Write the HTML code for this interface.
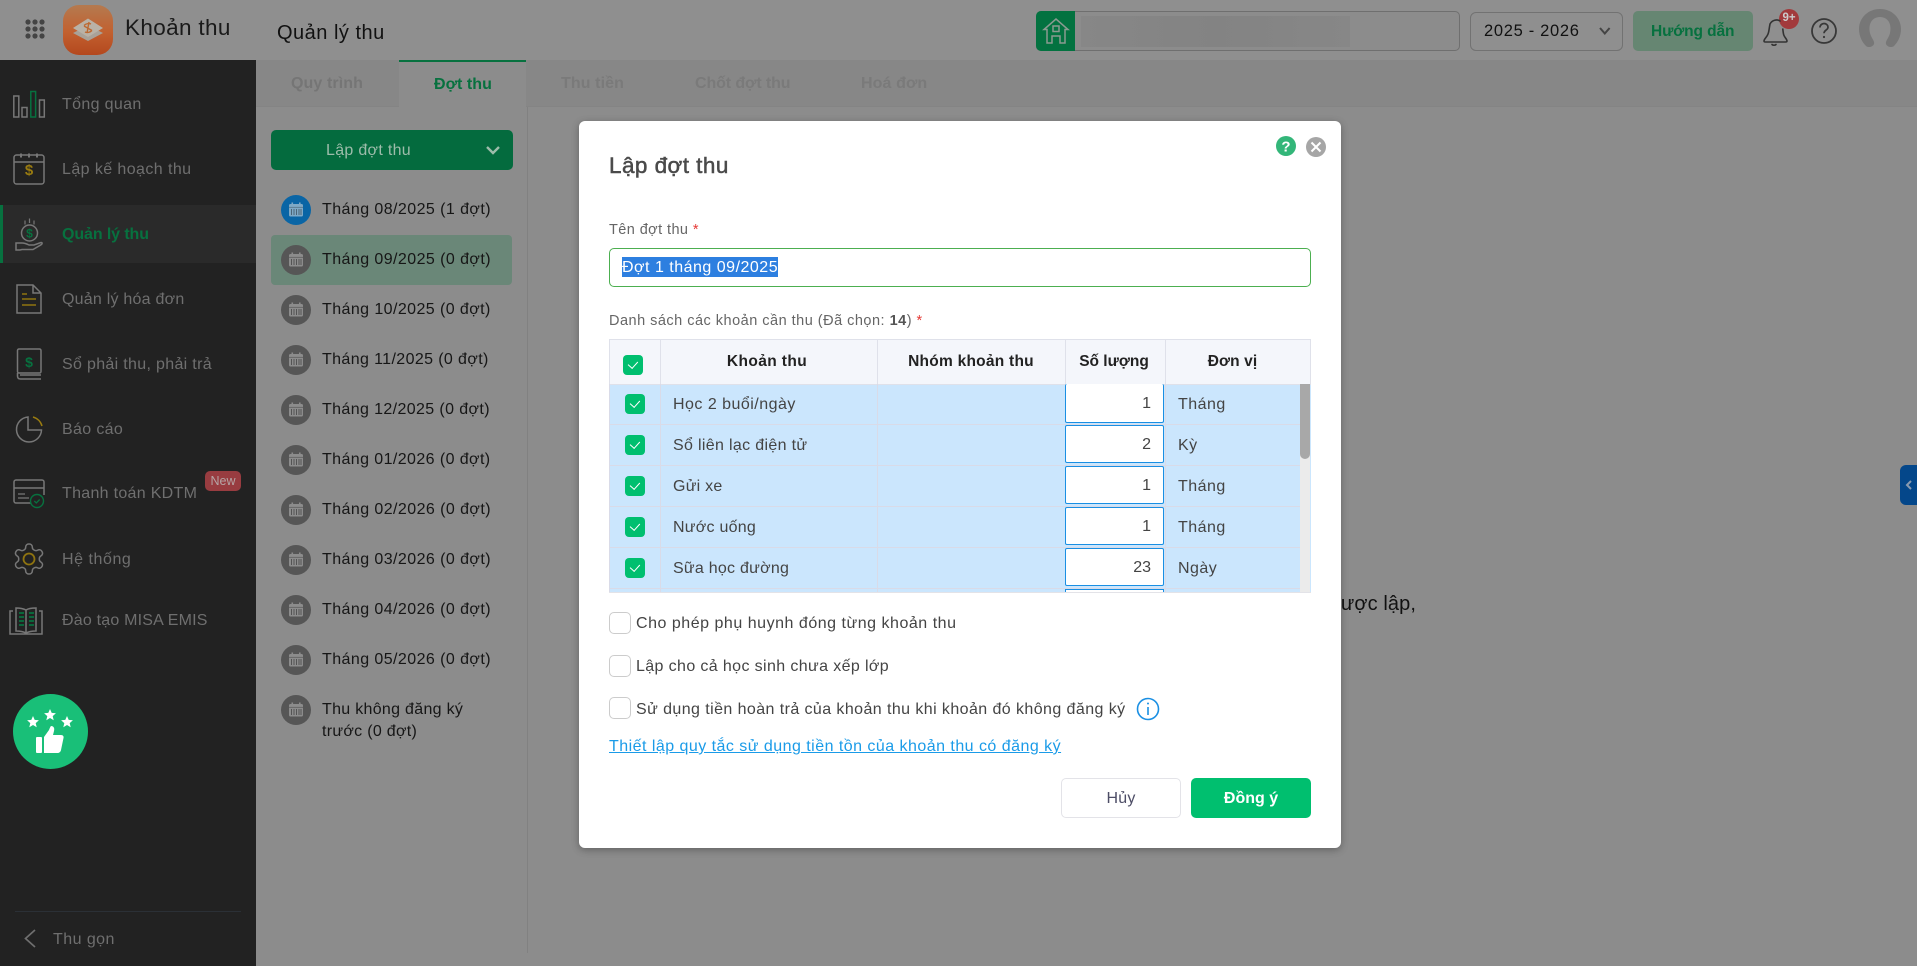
<!DOCTYPE html>
<html lang="vi">
<head>
<meta charset="utf-8">
<title>Khoản thu</title>
<style>
html,body{margin:0;padding:0;width:1917px;height:966px;overflow:hidden;background:#8c8c8c}
body{position:relative;font-family:"Liberation Sans",Arial,sans-serif;color:#111}
.t{position:absolute;white-space:nowrap;line-height:20px;height:20px}
.b{position:absolute;box-sizing:border-box}
svg.l{position:absolute;left:0;top:0;width:1917px;height:966px;pointer-events:none}
.side{font-size:16px;letter-spacing:.35px;color:#6f6f6f;left:62px}
.m{font-size:16px;letter-spacing:.43px;color:#161616;left:322px}
.tab{font-size:16px;font-weight:bold;color:#7a7a7a;letter-spacing:.1px}
.cb{position:absolute;width:20px;height:20px;background:#00bf6f;border-radius:4px}
.cb:after{content:"";position:absolute;left:7px;top:4px;width:4.5px;height:8px;border:solid #fff;border-width:0 1.6px 1.6px 0;transform:rotate(42deg)}
.c{font-size:16px;letter-spacing:.25px;color:#444;left:673px}
.u{font-size:16px;letter-spacing:.48px;color:#444;left:1178px}
.q{position:absolute;box-sizing:border-box;left:1065px;width:99px;height:38px;background:#fff;border:1px solid #1a8fe3;border-radius:2px;font-size:16px;line-height:38px;text-align:right;padding-right:12px;color:#444}
.th{font-size:15.5px;font-weight:bold;color:#222;text-align:center;letter-spacing:.1px}
.ln{position:absolute;left:609px;width:691px;height:1px;background:#d9dbe8}
.vl{position:absolute;top:384px;width:1px;height:209px;background:#d9dbe8}
.op{position:absolute;box-sizing:border-box;left:609px;width:22px;height:22px;background:#fff;border:1px solid #ccc;border-radius:5px}
.ot{font-size:16px;letter-spacing:.42px;color:#444;left:636px}
.lab{font-size:14.5px;letter-spacing:.42px;color:#666}
</style>
</head>
<body>
<svg width="0" height="0" style="position:absolute">
<symbol id="cal" viewBox="0 0 30 30"><rect x="8" y="9" width="14" height="12.5" rx="1.5" fill="currentColor"/><rect x="10.500" y="7.500" width="1.600" height="3" fill="currentColor"/><rect x="18" y="7.500" width="1.600" height="3" fill="currentColor"/><path d="M8 12.300h14" stroke="#00000055" stroke-width=".8"/><path d="M10.500 14v6M13 14v6M15.500 14v6M18 14v6M20 14v6" stroke="#00000066" stroke-width="1"/></symbol>
</svg>

<!-- header -->
<div class="b" style="left:0;top:0;width:1917px;height:60px;background:#8f8f8f"></div>
<div class="b" style="left:63px;top:5px;width:50px;height:50px;border-radius:16px;background:linear-gradient(180deg,#b47a50 0%,#c2602f 55%,#b4481e 100%)"></div>
<div class="t" style="left:125px;top:17px;font-size:22.5px;line-height:22px;height:22px;letter-spacing:.35px;color:#1a1a1a">Khoản thu</div>
<div class="t" style="left:277px;top:22px;font-size:20px;line-height:22px;height:22px;letter-spacing:.5px;color:#111">Quản lý thu</div>

<!-- right header -->
<div class="b" style="left:1036px;top:11px;width:424px;height:40px;border:1px solid #6f6f6f;border-radius:5px;background:#8c8c8c"></div>
<div class="b" style="left:1036px;top:11px;width:39px;height:40px;background:#037240;border-radius:5px 0 0 5px"></div>
<div class="b" style="left:1081px;top:16px;width:269px;height:31px;background:linear-gradient(90deg,#878787,#838383 50%,#878787)"></div>
<div class="b" style="left:1470px;top:12px;width:153px;height:39px;border:1px solid #727272;border-radius:6px"></div>
<div class="t" style="left:1484px;top:21px;font-size:16.5px;letter-spacing:.68px;color:#111">2025 - 2026</div>
<div class="b" style="left:1633px;top:11px;width:120px;height:40px;border-radius:5px;background:#668672"></div>
<div class="t" style="left:1651px;top:22px;font-size:15.5px;font-weight:bold;letter-spacing:-.1px;color:#06713f">Hướng dẫn</div>
<div class="b" style="left:1779px;top:9px;width:20px;height:20px;border-radius:50%;background:#a23a3c;color:#ccc;font-size:11.500px;font-weight:bold;line-height:19px;text-align:center">9+</div>

<!-- sidebar -->
<div class="b" style="left:0;top:60px;width:256px;height:906px;background:#222"></div>
<div class="b" style="left:0;top:205px;width:256px;height:58px;background:#2a2a2a"></div>
<div class="b" style="left:0;top:205px;width:3px;height:58px;background:#07713f"></div>
<div class="t side" style="top:95px">Tổng quan</div>
<div class="t side" style="top:160px;letter-spacing:.42px">Lập kế hoạch thu</div>
<div class="t side" style="top:225px;color:#07713f;font-weight:bold;letter-spacing:-.1px">Quản lý thu</div>
<div class="t side" style="top:290px;letter-spacing:.23px">Quản lý hóa đơn</div>
<div class="t side" style="top:355px;letter-spacing:.32px">Sổ phải thu, phải trả</div>
<div class="t side" style="top:420px">Báo cáo</div>
<div class="t side" style="top:484px;letter-spacing:.3px">Thanh toán KDTM</div>
<div class="t side" style="top:550px;letter-spacing:.55px">Hệ thống</div>
<div class="t side" style="top:611px;letter-spacing:.2px">Đào tạo MISA EMIS</div>
<div class="b" style="left:205px;top:471px;width:36px;height:20px;border-radius:5px;background:#983c40;color:#b5a5a5;font-size:12.500px;line-height:20px;text-align:center">New</div>
<div class="b" style="left:15px;top:911px;width:226px;height:1px;background:#2b3036"></div>
<div class="t side" style="left:53px;top:930px;letter-spacing:.45px">Thu gọn</div>
<div class="b" style="left:13px;top:694px;width:75px;height:75px;border-radius:50%;background:#19bf78"></div>

<!-- tabs -->
<div class="b" style="left:256px;top:60px;width:1661px;height:47px;background:#878787;border-bottom:1px solid #848484"></div>
<div class="b" style="left:399px;top:60px;width:127px;height:47px;background:#8c8c8c;border-top:2px solid #07713f"></div>
<div class="t tab" style="left:291px;top:74px;color:#757575">Quy trình</div>
<div class="t tab" style="left:434px;top:75px;color:#07713f;letter-spacing:.05px">Đợt thu</div>
<div class="t tab" style="left:561px;top:74px">Thu tiền</div>
<div class="t tab" style="left:695px;top:74px;letter-spacing:-.1px">Chốt đợt thu</div>
<div class="t tab" style="left:861px;top:74px">Hoá đơn</div>

<!-- list -->
<div class="b" style="left:527px;top:107px;width:1px;height:846px;background:#818181"></div>
<div class="b" style="left:271px;top:130px;width:242px;height:40px;border-radius:5px;background:#046b3e"></div>
<div class="t" style="left:326px;top:141px;font-size:16px;letter-spacing:.3px;color:#9dbcaa">Lập đợt thu</div>
<div class="b" style="left:271px;top:235px;width:241px;height:50px;border-radius:4px;background:#6a8778"></div>
<div class="t m" style="top:200px">Tháng 08/2025 (1 đợt)</div>
<div class="t m" style="top:250px">Tháng 09/2025 (0 đợt)</div>
<div class="t m" style="top:300px;letter-spacing:.42px">Tháng 10/2025 (0 đợt)</div>
<div class="t m" style="top:350px;letter-spacing:.38px">Tháng 11/2025 (0 đợt)</div>
<div class="t m" style="top:400px;letter-spacing:.38px">Tháng 12/2025 (0 đợt)</div>
<div class="t m" style="top:450px;letter-spacing:.41px">Tháng 01/2026 (0 đợt)</div>
<div class="t m" style="top:500px">Tháng 02/2026 (0 đợt)</div>
<div class="t m" style="top:550px">Tháng 03/2026 (0 đợt)</div>
<div class="t m" style="top:600px">Tháng 04/2026 (0 đợt)</div>
<div class="t m" style="top:650px">Tháng 05/2026 (0 đợt)</div>
<div class="t m" style="top:700px;letter-spacing:.3px">Thu không đăng ký</div>
<div class="t m" style="top:722px;letter-spacing:.3px">trước (0 đợt)</div>

<!-- background message peeking from behind the modal -->
<div class="t" style="right:501px;top:594px;font-size:20px;letter-spacing:.1px;color:#111">Các đợt thu đã được lập,</div>

<!-- right drawer -->
<div class="b" style="left:1900px;top:465px;width:17px;height:40px;border-radius:6px 0 0 6px;background:#04478a"></div>

<svg class="l" viewBox="0 0 1917 966">
<!-- app grid -->
<g fill="#444"><circle cx="28" cy="22" r="2.600"/><circle cx="35" cy="22" r="2.600"/><circle cx="42" cy="22" r="2.600"/><circle cx="28" cy="29" r="2.600"/><circle cx="35" cy="29" r="2.600"/><circle cx="42" cy="29" r="2.600"/><circle cx="28" cy="36" r="2.600"/><circle cx="35" cy="36" r="2.600"/><circle cx="42" cy="36" r="2.600"/></g>
<!-- logo -->
<path d="M73 33l15-7.500 15 7.500-15 8z" fill="#a9a298"/>
<path d="M73 28l15-9.500 15 9.500-15 9z" fill="#b9b2a6"/>
<path d="M84 25.500c2-2 5-2.500 7-1.500M85 32c2 1 5 .5 7-1.500M84 26l8 4.500M89 22l-2 11" stroke="#bd6a32" stroke-width="1.400" fill="none"/>
<!-- house -->
<g fill="none" stroke="#8a9a90" stroke-width="1.500"><path d="M1044 29.500L1056 19l12 10.500h-3V43h-5v-7h-8v7h-5V29.500z"/><rect x="1053" y="26" width="6" height="5.500"/></g>
<path d="M1600 28l4.800 5.500 4.800-5.500" fill="none" stroke="#444" stroke-width="2"/>
<!-- bell -->
<g fill="none" stroke="#333" stroke-width="1.600" stroke-linecap="round" stroke-linejoin="round"><path d="M1780 21c-3-2-8-1-10 3-1 5-1 8-2 10-1 3-4 5-4 7 0 .8 .5 1 1.500 1h20c1 0 1.500-.5 1.500-1 0-2-3-4-3.500-7-.3-1.500-.5-3-.7-5"/><path d="M1772 44.500c1 1 3 1 4 0"/></g>
<!-- help -->
<circle cx="1824" cy="31" r="12" fill="none" stroke="#383838" stroke-width="1.800"/>
<path d="M1820 27.500c0-2.500 2-4 4-4s4 1.500 4 3.700c0 2.800-4 3-4 6" fill="none" stroke="#383838" stroke-width="1.700"/><circle cx="1824" cy="37" r="1.100" fill="#383838"/>
<!-- avatar -->
<path d="M1880 9C1868 9 1859 18 1859 29C1859 36 1862 42 1866 46C1868 48 1873 47 1874 44C1875 41 1871 38 1870 33C1868 24 1872 17 1880 17C1888 17 1892 24 1890 33C1889 38 1885 41 1886 44C1887 47 1892 48 1894 46C1898 42 1901 36 1901 29C1901 18 1892 9 1880 9Z" fill="#777"/>
<!-- sidebar icons -->
<g fill="none" stroke="#777" stroke-width="1.500">
<rect x="13.800" y="96" width="5" height="21"/><rect x="22" y="107.500" width="5" height="9.500"/><rect x="39.500" y="100" width="4.800" height="17"/>
<rect x="30.800" y="91.500" width="4.800" height="25.500" stroke="#07713f"/>
<rect x="14" y="155" width="30" height="29" rx="2.500"/><path d="M14 162h30"/><path d="M21 153.500v4M29 153.500v4M37 153.500v4" stroke-width="2"/>
<circle cx="29.500" cy="233" r="8"/><path d="M25 224.500v-4M29.500 223v-4.500M34 224.500v-4" stroke-width="1.200"/>
<path d="M16 243h6c3 0 5 1 7 2h5l7-2.500c1.500 0 1.500 1.500 0 2.300l-8 4.700H22l-2 .5h-4z"/>
<path d="M17 285h16l8 8v20H17zM33 285v8h8"/>
<rect x="17.500" y="349" width="23.500" height="24" rx="1.500"/><path d="M17.500 373v3c0 2 1 3 3 3H41M20 375h21"/>
<path d="M28 417A12.500 12.500 0 1 0 41.500 430H28z"/>
<path d="M37 498v5H16a2 2 0 0 1-2-2v-19a2 2 0 0 1 2-2h26a2 2 0 0 1 2 2v13M14 488h30"/><path d="M18 494h7M18 498h11" stroke-width="1.300"/>
<path transform="translate(11 541) scale(1.500)" stroke-width="1" d="M12.220 2h-.44a2 2 0 0 0-2 2v.18a2 2 0 0 1-1 1.730l-.43.25a2 2 0 0 1-2 0l-.15-.08a2 2 0 0 0-2.730.73l-.22.38a2 2 0 0 0 .73 2.730l.15.1a2 2 0 0 1 1 1.720v.51a2 2 0 0 1-1 1.740l-.15.09a2 2 0 0 0-.73 2.730l.22.38a2 2 0 0 0 2.730.73l.15-.08a2 2 0 0 1 2 0l.43.25a2 2 0 0 1 1 1.730V20a2 2 0 0 0 2 2h.44a2 2 0 0 0 2-2v-.18a2 2 0 0 1 1-1.730l.43-.25a2 2 0 0 1 2 0l.15.08a2 2 0 0 0 2.730-.73l.22-.39a2 2 0 0 0-.73-2.730l-.15-.08a2 2 0 0 1-1-1.740v-.5a2 2 0 0 1 1-1.740l.15-.09a2 2 0 0 0 .73-2.730l-.22-.38a2 2 0 0 0-2.730-.73l-.15.08a2 2 0 0 1-2 0l-.43-.25a2 2 0 0 1-1-1.730V4a2 2 0 0 0-2-2z"/>
<path d="M26 610c-4-2-7-2-10-2v23c4 0 7 .5 10 2zM26 610c3-2 7-2 10-2v23c-4 0-7 .5-10 2zM13 611h-3v23h32v-23h-3"/>
<path d="M35 930l-9.500 8.500 9.500 8.500" stroke="#6f6f6f" stroke-width="1.700"/>
</g>
<g stroke="#07713f" stroke-width="1.700"><path d="M19 613h5M19 617h5M19 621h5M19 625h5M29 613h5M29 617h5M29 621h5M29 625h5"/></g>
<g font-family="Liberation Sans,sans-serif" font-weight="bold" text-anchor="middle">
<text x="29" y="175" font-size="15" fill="#9a7c10">$</text>
<text x="29.500" y="237.500" font-size="12" fill="#07713f">$</text>
<text x="29" y="367" font-size="14" fill="#07713f">$</text>
</g>
<path d="M33 417a13 13 0 0 1 9 9" fill="none" stroke="#9a7c10" stroke-width="1.500"/>
<g fill="none" stroke="#8f7410" stroke-width="1.500"><path d="M22 294h5M22 299h14M22 305h14"/><circle cx="29" cy="559" r="5.500" stroke-width="1.800"/></g>
<circle cx="37" cy="501" r="6.500" fill="#222" stroke="#07713f" stroke-width="1.400"/><path d="M34.300 501l2 2 3.400-3.500" fill="none" stroke="#07713f" stroke-width="1.300"/>
<!-- thumb badge -->
<g fill="#fff"><path d="M33 716l1.700 3.900 4.200.4-3.200 2.800 1 4.100-3.700-2.200-3.700 2.200 1-4.100-3.200-2.800 4.200-.4z"/><path d="M50 709l1.700 3.900 4.200.4-3.200 2.800 1 4.100-3.700-2.200-3.700 2.200 1-4.100-3.200-2.800 4.200-.4z"/><path d="M67 716l1.700 3.900 4.200.4-3.200 2.800 1 4.100-3.700-2.200-3.700 2.200 1-4.100-3.200-2.800 4.200-.4z"/>
<rect x="36" y="737" width="6" height="16" rx="1"/><path d="M44 737l5-7c.7-1.500 1-3 2-4 2 0 4 1.500 3 5l-1 4h8c2 0 3 1.500 2.500 3l-2.500 12c-.4 2-2 3-3.500 3H44z"/></g>
<!-- small calendar circles -->
<circle cx="296" cy="210" r="15" fill="#0a65a5"/><use href="#cal" x="281" y="195" width="30" height="30" color="#7fa9c6"/>
<g fill="#565656"><circle cx="296" cy="260" r="15"/><circle cx="296" cy="310" r="15"/><circle cx="296" cy="360" r="15"/><circle cx="296" cy="410" r="15"/><circle cx="296" cy="460" r="15"/><circle cx="296" cy="510" r="15"/><circle cx="296" cy="560" r="15"/><circle cx="296" cy="610" r="15"/><circle cx="296" cy="660" r="15"/><circle cx="296" cy="710" r="15"/></g>
<g color="#8c8c8c"><use href="#cal" x="281" y="245" width="30" height="30"/><use href="#cal" x="281" y="295" width="30" height="30"/><use href="#cal" x="281" y="345" width="30" height="30"/><use href="#cal" x="281" y="395" width="30" height="30"/><use href="#cal" x="281" y="445" width="30" height="30"/><use href="#cal" x="281" y="495" width="30" height="30"/><use href="#cal" x="281" y="545" width="30" height="30"/><use href="#cal" x="281" y="595" width="30" height="30"/><use href="#cal" x="281" y="645" width="30" height="30"/><use href="#cal" x="281" y="695" width="30" height="30"/></g>
<path d="M487 147l6 6 6-6" fill="none" stroke="#9dbcaa" stroke-width="2.400"/>
<path d="M1911 481l-4 4 4 4" fill="none" stroke="#8a9bb0" stroke-width="2"/>
</svg>

<!-- modal -->
<div class="b" style="left:579px;top:121px;width:762px;height:727px;background:#fff;border-radius:6px;box-shadow:0 2px 8px rgba(0,0,0,.3)"></div>
<div class="t" style="left:609px;top:154px;font-size:22.5px;line-height:24px;height:24px;letter-spacing:.45px;color:#4a4a4a;-webkit-text-stroke:.5px #4a4a4a">Lập đợt thu</div>
<div class="t lab" style="left:609px;top:220px">Tên đợt thu <span style="color:#e53935">*</span></div>
<div class="b" style="left:609px;top:248px;width:702px;height:39px;border:1px solid #4caf50;border-radius:5px"></div>
<div class="t" style="left:622px;top:257px;height:20px;background:#2d7fe0;color:#fff;font-size:16px;line-height:22px;letter-spacing:.5px">Đợt 1 tháng 09/2025</div>
<div class="t lab" style="left:609px;top:311px;letter-spacing:.49px">Danh sách các khoản cần thu (Đã chọn: <b style="color:#555">14</b>) <span style="color:#e53935">*</span></div>

<!-- table -->
<div class="b" style="left:609px;top:339px;width:702px;height:254px;background:#cbe6fd;overflow:hidden"></div>
<div class="b" style="left:609px;top:339px;width:702px;height:46px;background:#f4f6fb;border:1px solid #dfe1ea"></div>
<div class="b" style="left:660px;top:339px;width:1px;height:45px;background:#dfe1ea"></div>
<div class="b" style="left:877px;top:339px;width:1px;height:45px;background:#dfe1ea"></div>
<div class="b" style="left:1065px;top:339px;width:1px;height:45px;background:#dfe1ea"></div>
<div class="b" style="left:1165px;top:339px;width:1px;height:45px;background:#dfe1ea"></div>
<div class="t th" style="left:657px;top:352px;width:220px;letter-spacing:.4px">Khoản thu</div>
<div class="t th" style="left:877px;top:352px;width:188px;letter-spacing:.25px">Nhóm khoản thu</div>
<div class="t th" style="left:1064px;top:352px;width:100px;letter-spacing:0">Số lượng</div>
<div class="t th" style="left:1160px;top:352px;width:145px">Đơn vị</div>
<div class="cb" style="left:623px;top:355px"></div>

<div class="ln" style="top:424px"></div><div class="ln" style="top:465px"></div><div class="ln" style="top:506px"></div><div class="ln" style="top:547px"></div><div class="ln" style="top:588px"></div>
<div class="vl" style="left:609px"></div><div class="vl" style="left:660px"></div><div class="vl" style="left:877px"></div><div class="vl" style="left:1165px"></div>

<div class="cb" style="left:625px;top:394px"></div><div class="cb" style="left:625px;top:435px"></div><div class="cb" style="left:625px;top:476px"></div><div class="cb" style="left:625px;top:517px"></div><div class="cb" style="left:625px;top:558px"></div>
<div class="t c" style="top:395px;letter-spacing:.48px">Học 2 buổi/ngày</div>
<div class="t c" style="top:436px;letter-spacing:.33px">Sổ liên lạc điện tử</div>
<div class="t c" style="top:477px">Gửi xe</div>
<div class="t c" style="top:518px">Nước uống</div>
<div class="t c" style="top:559px">Sữa học đường</div>
<div class="q" style="top:384px;height:39px;border-top:0;line-height:40px">1</div>
<div class="q" style="top:425px">2</div>
<div class="q" style="top:466px">1</div>
<div class="q" style="top:507px">1</div>
<div class="q" style="top:548px">23</div>
<div class="b" style="left:1065px;top:589px;width:99px;height:4px;background:#fff;border:1px solid #1a8fe3;border-bottom:0"></div>
<div class="t u" style="top:395px">Tháng</div>
<div class="t u" style="top:436px">Kỳ</div>
<div class="t u" style="top:477px">Tháng</div>
<div class="t u" style="top:518px">Tháng</div>
<div class="t u" style="top:559px">Ngày</div>
<div class="b" style="left:1300px;top:384px;width:10px;height:209px;background:#ebebeb"></div>
<div class="b" style="left:1300px;top:384px;width:10px;height:75px;background:#a8a8a8;border-radius:0 0 5px 5px"></div>
<div class="b" style="left:609px;top:592px;width:702px;height:1px;background:#e3e3e8"></div>

<!-- options -->
<div class="op" style="top:612px"></div>
<div class="t ot" style="top:614px;letter-spacing:.52px">Cho phép phụ huynh đóng từng khoản thu</div>
<div class="op" style="top:655px"></div>
<div class="t ot" style="top:657px;letter-spacing:.38px">Lập cho cả học sinh chưa xếp lớp</div>
<div class="op" style="top:697px"></div>
<div class="t ot" style="top:700px">Sử dụng tiền hoàn trả của khoản thu khi khoản đó không đăng ký</div>
<div class="t" style="left:609px;top:737px;font-size:16px;letter-spacing:.47px;color:#1a9be8;text-decoration:underline">Thiết lập quy tắc sử dụng tiền tồn của khoản thu có đăng ký</div>
<div class="b" style="left:1061px;top:778px;width:120px;height:40px;border:1px solid #e3e3e8;border-radius:5px;background:#fff;color:#4d4d66;font-size:16px;line-height:40px;text-align:center;letter-spacing:.2px">Hủy</div>
<div class="b" style="left:1191px;top:778px;width:120px;height:40px;border-radius:5px;background:#00bf6f;color:#fff;font-size:16px;font-weight:bold;line-height:42px;text-align:center">Đồng ý</div>

<svg class="l" viewBox="0 0 1917 966">
<circle cx="1286" cy="146" r="10" fill="#33b679"/><text x="1286" y="151.500" font-family="Liberation Sans,sans-serif" font-size="15" font-weight="bold" fill="#fff" text-anchor="middle">?</text>
<circle cx="1316" cy="147" r="10" fill="#a6a6a6"/><path d="M1311.500 142.500l9 9M1320.500 142.500l-9 9" stroke="#fff" stroke-width="2"/>
<circle cx="1148" cy="709" r="10.500" fill="none" stroke="#1a8fe3" stroke-width="1.600"/>
<path d="M1148 707v8" stroke="#1a8fe3" stroke-width="1.600"/><circle cx="1148" cy="703.500" r="1" fill="#1a8fe3"/>
</svg>
</body>
</html>
